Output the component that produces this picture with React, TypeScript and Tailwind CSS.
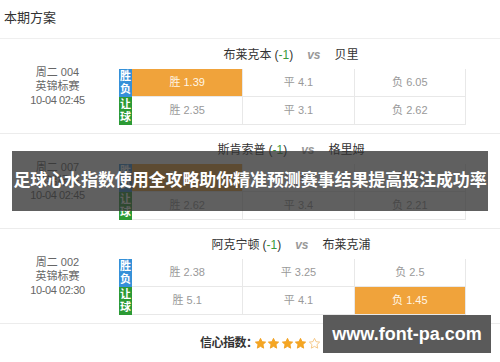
import React from "react";

type Odds = { label: string; value: string; hot?: boolean };

interface Match {
  week: string;
  league: string;
  time: string;
  home: string;
  handicap: string;
  away: string;
  rows: Odds[][];
}

const matches: Match[] = [
  {
    week: "周二 004",
    league: "英锦标赛",
    time: "10-04 02:45",
    home: "布莱克本",
    handicap: "-1",
    away: "贝里",
    rows: [
      [{ label: "胜", value: "1.39", hot: true }, { label: "平", value: "4.1" }, { label: "负", value: "6.05" }],
      [{ label: "胜", value: "2.35" }, { label: "平", value: "3.1" }, { label: "负", value: "2.62" }],
    ],
  },
  {
    week: "周二 007",
    league: "英锦标赛",
    time: "10-04 02:45",
    home: "斯肯索普",
    handicap: "-1",
    away: "格里姆",
    rows: [
      [{ label: "胜", value: "1.63", hot: true }, { label: "平", value: "3.7" }, { label: "负", value: "4.9" }],
      [{ label: "胜", value: "2.62" }, { label: "平", value: "3.4" }, { label: "负", value: "2.21" }],
    ],
  },
  {
    week: "周二 002",
    league: "英锦标赛",
    time: "10-04 02:30",
    home: "阿克宁顿",
    handicap: "-1",
    away: "布莱克浦",
    rows: [
      [{ label: "胜", value: "2.38" }, { label: "平", value: "3.25" }, { label: "负", value: "2.5" }],
      [{ label: "胜", value: "5.1" }, { label: "平", value: "4.1" }, { label: "负", value: "1.45", hot: true }],
    ],
  },
];

const font = "font-['Liberation_Sans','Noto_Sans_CJK_SC',sans-serif]";

function Star({ filled }: { filled: boolean }) {
  return (
    <svg width="13" height="13" viewBox="0 0 24 24" className="shrink-0">
      <path
        d="M12 2.5l2.9 6.1 6.6.8-4.9 4.6 1.3 6.6L12 17.3l-5.9 3.3 1.3-6.6-4.9-4.6 6.6-.8z"
        fill={filled ? "#f5a623" : "none"}
        stroke={filled ? "#f0a020" : "#f3c27a"}
        strokeWidth="1.6"
        strokeLinejoin="round"
      />
    </svg>
  );
}

function Badge({ chars, color }: { chars: string; color: string }) {
  return (
    <div className={`w-[13px] h-[28px] flex flex-col items-center justify-center text-white text-[11px] leading-[13px] font-bold ${color}`}>
      <span>{chars[0]}</span>
      <span>{chars[1]}</span>
    </div>
  );
}

function MatchBlock({ m }: { m: Match }) {
  return (
    <div className="flex h-[95px] border-b border-[#ececec]">
      <div className="w-[115px] flex flex-col items-center justify-center text-[11px] leading-[14px] text-[#666] pb-[1px]">
        <span>{m.week}</span>
        <span>{m.league}</span>
        <span className="tracking-[-0.4px]">{m.time}</span>
      </div>
      <div className="w-[352px] flex flex-col">
        <div className="h-[30px] flex items-center justify-center text-[12px] text-[#333] pt-[2px]">
          <span>{m.home}</span>
          <span className="ml-[3px]">
            (<span className="text-[#3a9a3a]">{m.handicap}</span>)
          </span>
          <span className="mx-[14px] italic font-bold text-[#999]">vs</span>
          <span>{m.away}</span>
        </div>
        <div className="flex ml-[4px]">
          <div className="flex flex-col">
            <Badge chars="胜负" color="bg-[#3590d8]" />
            <Badge chars="让球" color="bg-[#2c9a34]" />
          </div>
          <div className="w-[334px] flex flex-col border-r border-[#e8e8e8]">
            {m.rows.map((row, ri) => (
              <div key={ri} className="flex h-[28px] border-b border-[#e8e8e8]">
                {row.map((o, ci) => (
                  <div
                    key={ci}
                    className={`flex-1 flex items-center justify-center text-[11px] ${
                      ci > 0 ? "border-l border-[#e8e8e8]" : ""
                    } ${o.hot ? "bg-[#f0a33b] text-[#fff6e6]" : "text-[#999]"}`}
                  >
                    {o.label} {o.value}
                  </div>
                ))}
              </div>
            ))}
          </div>
        </div>
      </div>
    </div>
  );
}

export default function App() {
  return (
    <div className={`relative w-[500px] h-[362px] overflow-hidden bg-white ${font}`}>
      <div className="h-[39px] flex items-center pl-[4px] pb-[2px] border-b border-[#efefef] text-[13px] text-[#333]">
        本期方案
      </div>
      {matches.map((m, i) => (
        <MatchBlock key={i} m={m} />
      ))}
      <div className="h-[38px] flex items-center pl-[200px] text-[12px] font-bold text-[#333]">
        <span className="tracking-[-0.5px]">信心指数：</span>
        <div className="flex ml-[-4px] gap-[0.5px]">
          {[0, 1, 2, 3, 4].map((s) => (
            <Star key={s} filled={s < 4} />
          ))}
        </div>
      </div>

      {/* title banner over the list */}
      <div className="absolute left-[12px] top-[151px] w-[476px] h-[60px] bg-[rgba(48,48,48,0.77)] flex items-center justify-center">
        <span className="whitespace-nowrap text-white font-bold text-[17px] tracking-[-0.1px]">
          足球心水指数使用全攻略助你精准预测赛事结果提高投注成功率
        </span>
      </div>

      {/* site watermark */}
      <div className="absolute left-[323px] top-[315px] w-[168px] h-[38px] bg-[#5a5a5a] flex items-center justify-center">
        <span className="text-white font-bold text-[18px] font-['Liberation_Sans',sans-serif]">www.font-pa.com</span>
      </div>
    </div>
  );
}
